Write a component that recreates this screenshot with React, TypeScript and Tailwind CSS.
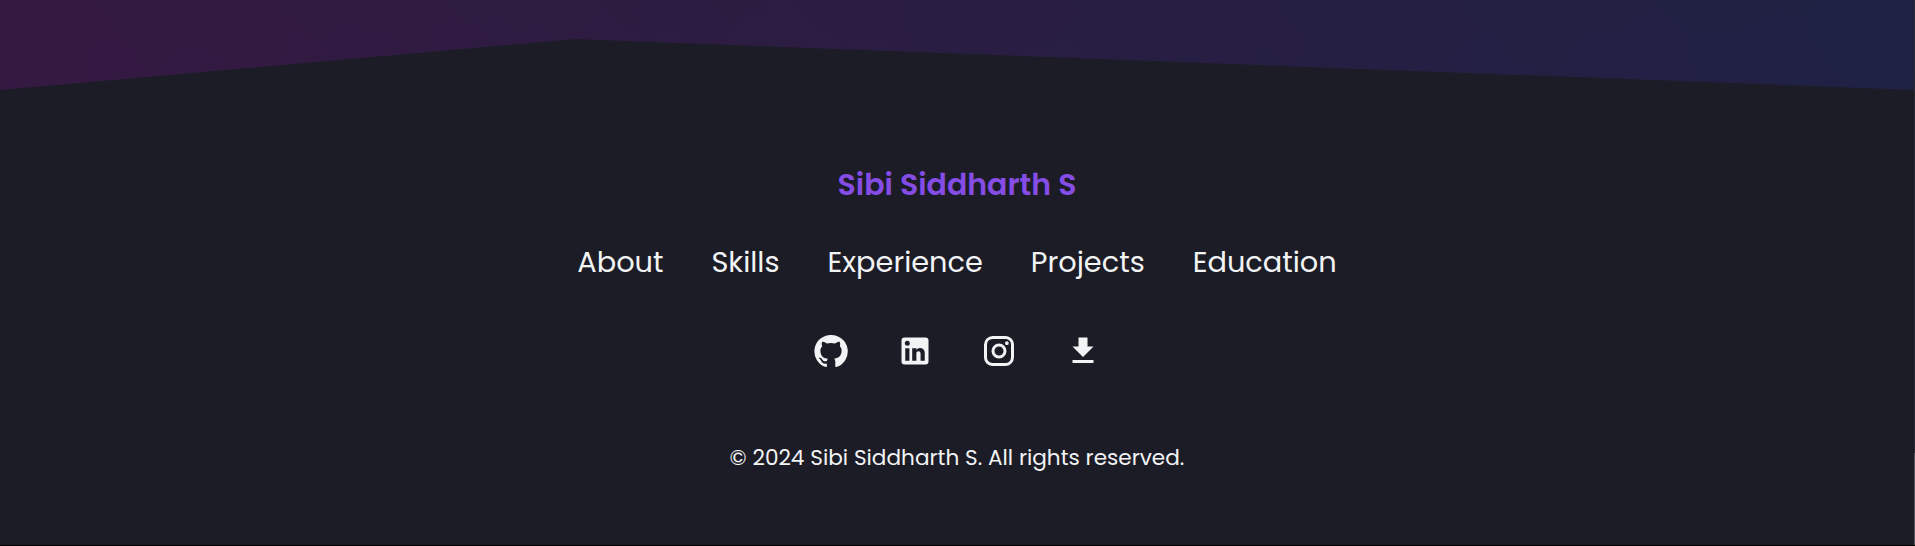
const NAV = ['About', 'Skills', 'Experience', 'Projects', 'Education'];

const ICONS = [
  {
    name: 'GitHub',
    d: 'M12 1.27a11 11 0 00-3.48 21.46c.55.09.73-.28.73-.55v-1.84c-3.03.64-3.67-1.46-3.67-1.46-.55-1.29-1.28-1.65-1.28-1.65-.92-.65.1-.65.1-.65 1.1 0 1.73 1.1 1.73 1.1.92 1.65 2.57 1.2 3.21.92a2 2 0 01.64-1.47c-2.47-.27-5.04-1.19-5.04-5.5 0-1.1.46-2.1 1.2-2.84a3.76 3.76 0 010-2.93s.91-.28 3.11 1.1c1.8-.49 3.7-.49 5.5 0 2.1-1.38 3.02-1.1 3.02-1.1a3.76 3.76 0 01.1 2.93c.83.74 1.2 1.74 1.2 2.94 0 4.21-2.57 5.13-5.04 5.4.45.37.82.92.82 2.02v3.03c0 .27.1.64.73.55A11 11 0 0012 1.27',
  },
  {
    name: 'LinkedIn',
    d: 'M19 3a2 2 0 0 1 2 2v14a2 2 0 0 1-2 2H5a2 2 0 0 1-2-2V5a2 2 0 0 1 2-2h14m-.5 15.5v-5.3a3.26 3.26 0 0 0-3.26-3.26c-.85 0-1.84.52-2.32 1.3v-1.11h-2.79v8.37h2.79v-4.93c0-.77.62-1.4 1.39-1.4a1.4 1.4 0 0 1 1.4 1.4v4.93h2.79M6.88 8.56a1.68 1.68 0 0 0 1.68-1.68c0-.93-.75-1.69-1.68-1.69a1.69 1.69 0 0 0-1.69 1.69c0 .93.76 1.68 1.69 1.68m1.39 9.94v-8.37H5.5v8.37h2.77z',
  },
  {
    name: 'Instagram',
    d: 'M7.8 2h8.4C19.4 2 22 4.6 22 7.8v8.4a5.8 5.8 0 0 1-5.8 5.8H7.8C4.6 22 2 19.4 2 16.2V7.8A5.8 5.8 0 0 1 7.8 2m-.2 2A3.6 3.6 0 0 0 4 7.6v8.8C4 18.39 5.61 20 7.6 20h8.8a3.6 3.6 0 0 0 3.6-3.6V7.6C20 5.61 18.39 4 16.4 4H7.6m9.65 1.5a1.25 1.25 0 0 1 1.25 1.25A1.25 1.25 0 0 1 17.25 8 1.25 1.25 0 0 1 16 6.75a1.25 1.25 0 0 1 1.25-1.25M12 7a5 5 0 0 1 5 5 5 5 0 0 1-5 5 5 5 0 0 1-5-5 5 5 0 0 1 5-5m0 2a3 3 0 0 0-3 3 3 3 0 0 0 3 3 3 3 0 0 0 3-3 3 3 0 0 0-3-3z',
  },
  { name: 'Download', d: 'M19 9h-4V3H9v6H5l7 7 7-7zM5 18v2h14v-2H5z' },
];

export default function App() {
  return (
    <div className="relative flex h-[546px] w-full flex-col overflow-hidden border-b border-black bg-[#1c1c27] font-[Poppins,Inter,sans-serif] text-[#f2f3f4]">
      <div className="h-[90px] shrink-0 bg-[linear-gradient(38.73deg,rgba(204,0,187,0.15)_0%,rgba(201,32,184,0)_50%),linear-gradient(141.27deg,rgba(0,70,209,0)_50%,rgba(0,70,209,0.15)_100%)] bg-[length:100%_2550px] bg-bottom [clip-path:polygon(0_0,100%_0,100%_100%,30%_39px,0_100%)]" />
      <footer className="flex flex-col items-center pr-px">
        <h1 className="mt-[72px] whitespace-nowrap text-[30px] font-semibold leading-[45px] text-[#854ce6]">
          Sibi Siddharth S
        </h1>
        <nav className="mt-[33px] flex gap-12">
          {NAV.map((label) => (
            <a key={label} href="#" className="whitespace-nowrap text-[28.8px] leading-[45px]">
              {label}
            </a>
          ))}
        </nav>
        <div className="mt-12 flex gap-12">
          {ICONS.map((i) => (
            <a key={i.name} href="#" aria-label={i.name}>
              <svg viewBox="0 0 24 24" className="size-9 fill-current">
                <path d={i.d} />
              </svg>
            </a>
          ))}
        </div>
        <p className="mt-[72px] whitespace-nowrap text-[21.6px] leading-[33px]">
          © 2024 Sibi Siddharth S. All rights reserved.
        </p>
      </footer>
      <div className="absolute inset-y-0 right-0 flex w-px flex-col justify-end bg-[#282b35]">
        <div className="h-[92px] bg-[#55555d]" />
      </div>
    </div>
  );
}
